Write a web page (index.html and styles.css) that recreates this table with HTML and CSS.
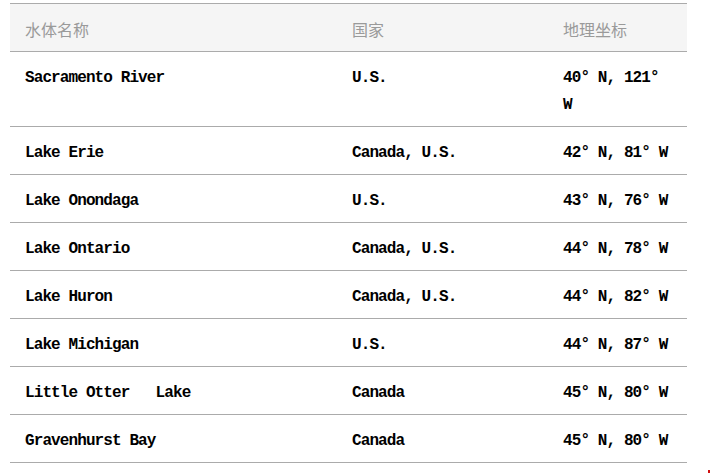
FILE: index.html
```html
<!DOCTYPE html>
<html lang="zh">
<head>
<meta charset="utf-8">
<title>水体</title>
<link rel="stylesheet" href="styles.css">
</head>
<body>
<table class="geo-table">
  <colgroup>
    <col class="col-name">
    <col class="col-country">
    <col class="col-coord">
  </colgroup>
  <thead>
    <tr>
      <th>水体名称</th>
      <th>国家</th>
      <th>地理坐标</th>
    </tr>
  </thead>
  <tbody>
    <tr><td>Sacramento River</td><td>U.S.</td><td class="coord">40° N, 121° W</td></tr>
    <tr><td>Lake Erie</td><td>Canada, U.S.</td><td class="coord">42° N, 81° W</td></tr>
    <tr><td>Lake Onondaga</td><td>U.S.</td><td class="coord">43° N, 76° W</td></tr>
    <tr><td>Lake Ontario</td><td>Canada, U.S.</td><td class="coord">44° N, 78° W</td></tr>
    <tr><td>Lake Huron</td><td>Canada, U.S.</td><td class="coord">44° N, 82° W</td></tr>
    <tr><td>Lake Michigan</td><td>U.S.</td><td class="coord">44° N, 87° W</td></tr>
    <tr><td>Little Otter&nbsp;&nbsp; Lake</td><td>Canada</td><td class="coord">45° N, 80° W</td></tr>
    <tr><td>Gravenhurst Bay</td><td>Canada</td><td class="coord">45° N, 80° W</td></tr>
  </tbody>
</table>
<span class="corner-mark"></span>
</body>
</html>
```

FILE: styles.css
```css
html, body {
  margin: 0;
  padding: 0;
  background: #ffffff;
}

body {
  padding: 3px 0 0 10px;
  position: relative;
  min-height: 473px;
  box-sizing: border-box;
}

.geo-table {
  width: 677px;
  border-collapse: collapse;
  table-layout: fixed;
  font-family: "Liberation Mono", "Noto Sans CJK SC", monospace;
}

.col-name { width: 327px; }
.col-country { width: 211px; }
.col-coord { width: 139px; }

.geo-table th {
  background: #f5f5f5;
  color: #9a9a9a;
  font-family: "Noto Sans CJK SC", sans-serif;
  font-weight: normal;
  font-size: 16px;
  text-align: left;
  height: 48px;
  padding: 2px 15px 0 15px;
  box-sizing: border-box;
  border-top: 1px solid #ababab;
  border-bottom: 1px solid #ababab;
  vertical-align: middle;
}

.geo-table td {
  color: #000000;
  font-size: 16px;
  font-weight: bold;
  letter-spacing: -0.9px;
  line-height: 27px;
  padding: 13px 15px 7px 15px;
  border-bottom: 1px solid #ababab;
  vertical-align: top;
}

.corner-mark {
  position: absolute;
  left: 708px;
  top: 470px;
  width: 2px;
  height: 3px;
  background: #d01010;
}
```
